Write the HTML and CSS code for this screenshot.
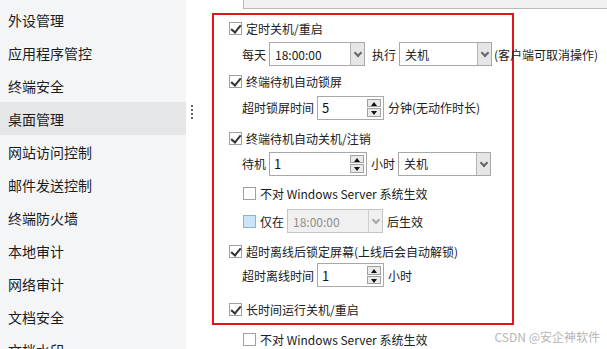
FILE: index.html
```html
<!DOCTYPE html>
<html lang="zh">
<head>
  <meta charset="UTF-8" />
  <title>桌面管理</title>
  <link rel="stylesheet" href="styles.css">
</head>
<body>

  <!-- Menu gauche -->
  <aside class="sidebar">
    <div class="nav-item">外设管理</div>
    <div class="nav-item">应用程序管控</div>
    <div class="nav-item">终端安全</div>
    <div class="nav-item active">桌面管理</div>
    <div class="nav-item">网站访问控制</div>
    <div class="nav-item">邮件发送控制</div>
    <div class="nav-item">终端防火墙</div>
    <div class="nav-item">本地审计</div>
    <div class="nav-item">网络审计</div>
    <div class="nav-item">文档安全</div>
    <div class="nav-item">文档水印</div>
  </aside>

  <div class="splitter">
    <span></span><span></span><span></span><span></span>
  </div>

  <main class="main">
    <div class="top-strip"></div>

    <section class="policy-box">
      <!-- 定时关机 -->
      <label class="opt h27"><span class="cb checked"></span>定时关机/重启</label>
      <div class="sub h24">
        <span>每天</span>
        <div class="combo w96"><span class="val">18:00:00</span><span class="arrow"></span></div>
        <span class="sp4">执行</span>
        <div class="combo w93"><span class="val">关机</span><span class="arrow"></span></div>
        <span class="note">(客户端可取消操作)</span>
      </div>

      <!-- 锁屏 -->
      <label class="opt h30"><span class="cb checked"></span>终端待机自动锁屏</label>
      <div class="sub h23">
        <span>超时锁屏时间</span>
        <div class="spin"><span class="val">5</span><span class="btns"><i class="up"></i><i class="down"></i></span></div>
        <span class="after">分钟(无动作时长)</span>
      </div>

      <!-- 关机/注销 -->
      <label class="opt h28 mt5"><span class="cb checked"></span>终端待机自动关机/注销</label>
      <div class="sub h23">
        <span>待机</span>
        <div class="spin w98"><span class="val">1</span><span class="btns"><i class="up"></i><i class="down"></i></span></div>
        <span class="sp5">小时</span>
        <div class="combo w93"><span class="val">关机</span><span class="arrow"></span></div>
      </div>
      <label class="sub check h32 mt2"><span class="cb"></span>不对 Windows Server 系统生效</label>
      <div class="sub check h24">
        <span class="cb light"></span><span>仅在</span>
        <div class="combo w96 disabled"><span class="val">18:00:00</span><span class="arrow"></span></div>
        <span class="after">后生效</span>
      </div>

      <!-- 离线锁屏 -->
      <label class="opt h24 mt6"><span class="cb checked"></span>超时离线后锁定屏幕(上线后会自动解锁)</label>
      <div class="sub h24">
        <span>超时离线时间</span>
        <div class="spin"><span class="val">1</span><span class="btns"><i class="up"></i><i class="down"></i></span></div>
        <span class="after">小时</span>
      </div>

      <!-- 长时间运行 -->
      <label class="opt h26 mt9"><span class="cb checked"></span>长时间运行关机/重启</label>
    </section>

    <label class="sub check outside h28"><span class="cb"></span>不对 Windows Server 系统生效</label>
  </main>

  <div class="watermark">CSDN @安企神软件</div>

</body>
</html>
```

FILE: styles.css
```css
/* === BASE === */
* { margin: 0; padding: 0; box-sizing: border-box; }

body {
  width: 607px;
  height: 349px;
  overflow: hidden;
  display: flex;
  background: #fff;
  color: #202020;
  font-family: "Noto Sans CJK SC", "Noto Sans", sans-serif;
  font-size: 12px;
  position: relative;
}

/* === SIDEBAR === */
.sidebar {
  width: 186px;
  flex-shrink: 0;
  background: #f4f5f7;
  padding-top: 3px;
}

.nav-item {
  height: 33px;
  display: flex;
  align-items: center;
  padding-left: 8px;
  font-size: 14px;
  color: #1c1c1c;
}

.nav-item.active { background: #e5e6e8; }

.splitter {
  width: 26px;
  flex-shrink: 0;
  display: flex;
  flex-direction: column;
  gap: 2px;
  padding: 105px 0 0 5px;
}

.splitter span {
  width: 2px;
  height: 2px;
  background: #666;
}

/* === MAIN === */
.main {
  flex: 1;
  min-width: 0;
}

.top-strip {
  height: 9px;
  margin-left: 31px;
  background: #f0f0f0;
  border-left: 1px solid #b8b8b8;
  border-bottom: 1px solid #b8b8b8;
}

.policy-box {
  width: 302px;
  height: 312px;
  margin-top: 4px;
  border: 2px solid #e5141c;
  display: flex;
  flex-direction: column;
}

/* === ROWS === */
.opt, .sub {
  display: flex;
  align-items: center;
  white-space: nowrap;
}

.opt > *, .sub > * { flex-shrink: 0; }

.opt { padding-left: 15px; }
.opt .cb { margin-right: 4px; }

.sub { padding-left: 28px; }
.sub.check .cb { margin: 0 4px 0 1px; }
.sub.outside { padding-left: 30px; }

.h23 { height: 23px; }
.h24 { height: 24px; }
.h26 { height: 26px; }
.h27 { height: 27px; }
.h28 { height: 28px; }
.h30 { height: 30px; }
.h32 { height: 32px; }
.mt2 { margin-top: 2px; }
.mt5 { margin-top: 5px; }
.mt6 { margin-top: 6px; }
.mt9 { margin-top: 9px; }

.sp4 { margin-left: 7px; }
.sp5 { margin-left: 4px; }
.after { margin-left: 4px; }
.note { margin-left: 2px; }

/* === CHECKBOX === */
.cb {
  width: 13px;
  height: 13px;
  border: 1px solid #a0a0a0;
  background: #fff;
  position: relative;
}

.cb.checked::after {
  content: "";
  position: absolute;
  left: 3px;
  top: 0px;
  width: 4px;
  height: 8px;
  border-right: 2px solid #333;
  border-bottom: 2px solid #333;
  transform: rotate(40deg);
}

.cb.light {
  background: #cce4f7;
  border-color: #8db2d6;
}

/* === COMBO === */
.combo {
  height: 24px;
  margin-left: 3px;
  display: flex;
  border: 1px solid #a8a8a8;
  background: #fff;
}

.w96 { width: 96px; }
.w93 { width: 93px; }

.combo .val {
  flex: 1;
  display: flex;
  align-items: center;
  padding-left: 5px;
}

.combo .arrow {
  width: 14px;
  border-left: 1px solid #b4b4b4;
  background: #e6e6e6;
  position: relative;
}

.combo .arrow::after {
  content: "";
  position: absolute;
  left: 4px;
  top: 7px;
  width: 4px;
  height: 4px;
  border-right: 2px solid #666;
  border-bottom: 2px solid #666;
  transform: rotate(45deg);
}

.combo.disabled { background: #f0f0f0; border-color: #c4c4c4; }
.combo.disabled .val { color: #8e8e8e; }
.combo.disabled .arrow { background: #f0f0f0; border-left-color: #cfcfcf; }
.combo.disabled .arrow::after { border-color: #a6a6a6; }

/* === SPIN === */
.spin {
  width: 67px;
  height: 24px;
  margin-left: 3px;
  display: flex;
  border: 1px solid #a8a8a8;
  background: #fff;
}

.spin.w98 { width: 98px; }

.spin .val {
  flex: 1;
  padding-left: 4px;
  display: flex;
  align-items: center;
  font-size: 13px;
  color: #111;
}

.spin .btns {
  width: 16px;
  display: flex;
  flex-direction: column;
  gap: 1px;
  padding: 2px 2px 2px 0;
}

.spin .btns i {
  flex: 1;
  border: 1px solid #a0a0a0;
  background: #eaeaea;
  position: relative;
}

.spin .btns i::after {
  content: "";
  position: absolute;
  left: 3px;
  top: 2px;
  border-left: 3px solid transparent;
  border-right: 3px solid transparent;
}

.spin .btns .up::after { border-bottom: 4px solid #111; }
.spin .btns .down::after { border-top: 4px solid #111; }

/* === WATERMARK === */
.watermark {
  position: absolute;
  right: 7px;
  bottom: 4px;
  font-size: 12px;
  color: #b6b6b6;
}
```
